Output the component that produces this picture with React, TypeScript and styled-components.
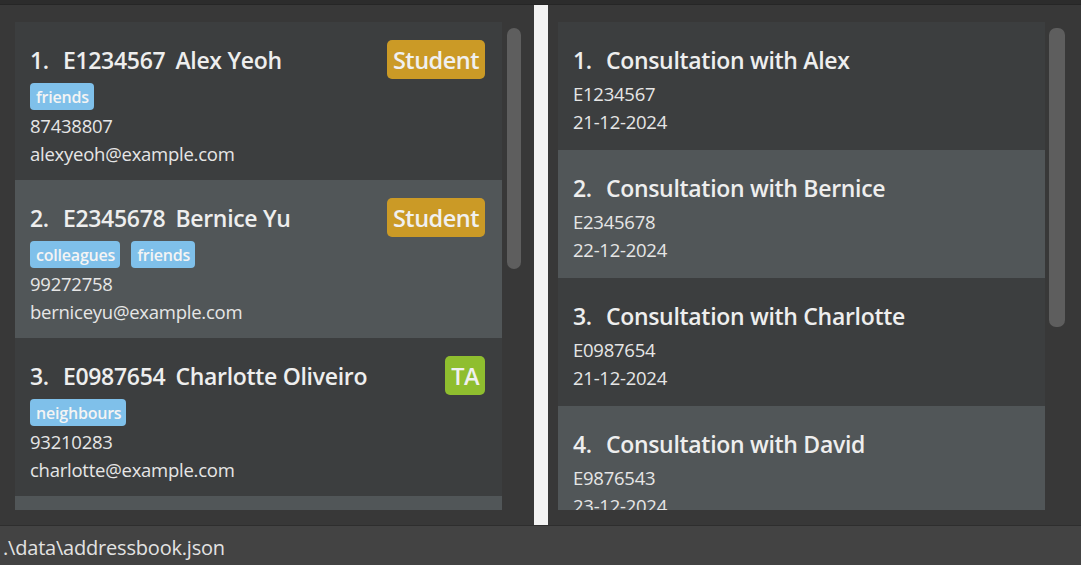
import React from "react";
import styled, { createGlobalStyle } from "styled-components";

const Global = createGlobalStyle`
  html, body { margin: 0; padding: 0; background: #383838; overflow: hidden; }
  body { font-family: "Open Sans", "Noto Sans", sans-serif; }
`;

const Window = styled.div`
  width: 1081px;
  height: 565px;
  display: flex;
  flex-direction: column;
  background: #383838;
`;

const TopEdge = styled.div`
  height: 5px;
  background: #2c2c2c;
  border-bottom: 1px solid #262626;
  box-sizing: border-box;
`;

const Main = styled.div`
  height: 520px;
  display: flex;
`;

const Panel = styled.div<{ $w?: number; $pl: number }>`
  ${(p) => (p.$w ? `width: ${p.$w}px;` : "flex: 1;")}
  box-sizing: border-box;
  padding: 17px 0 15px ${(p) => p.$pl}px;
  display: flex;
  background: #383838;
`;

const List = styled.div`
  width: 487px;
  height: 488px;
  overflow: hidden;
  display: flex;
  flex-direction: column;
`;

const ScrollTrack = styled.div<{ $ml: number }>`
  padding: 6px 0 0 ${(p) => p.$ml}px;
`;

const Thumb = styled.div<{ $w: number; $h: number }>`
  width: ${(p) => p.$w}px;
  height: ${(p) => p.$h}px;
  background: #5e5e5e;
  border-radius: 7px;
`;

const Divider = styled.div`
  width: 14px;
  background: #f3f3f3;
`;

const Card = styled.div<{ $even: boolean; $h: number }>`
  flex: 0 0 ${(p) => p.$h}px;
  height: ${(p) => p.$h}px;
  box-sizing: border-box;
  padding: 18px 17px 0 15px;
  background: ${(p) => (p.$even ? "#515658" : "#3c3e3f")};
  color: #ececec;
  display: flex;
  flex-direction: column;
`;

const HeadRow = styled.div`
  height: 39px;
  display: flex;
  align-items: center;
  justify-content: space-between;
`;

const Title = styled.div`
  font-size: 23px;
  font-weight: 600;
  white-space: nowrap;
  color: #eeeeee;
  letter-spacing: -0.3px;
`;

const Idx = styled.span<{ $gap: number }>`
  margin-right: ${(p) => p.$gap}px;
`;

const Mid = styled.span`
  margin-right: 10px;
`;

const Badge = styled.div<{ $bg: string }>`
  height: 39px;
  padding: 0 6px;
  box-sizing: border-box;
  border-radius: 5px;
  background: ${(p) => p.$bg};
  color: #f0f0f0;
  font-size: 23.5px;
  font-weight: 600;
  display: flex;
  align-items: center;
  letter-spacing: -0.5px;
`;

const Tags = styled.div`
  display: flex;
  gap: 11px;
  margin-top: 4px;
`;

const Tag = styled.div`
  height: 27px;
  padding: 0 5px 0 6px;
  border-radius: 4px;
  background: #7fc0ea;
  color: #f4f4f4;
  font-size: 16px;
  font-weight: 600;
  display: flex;
  align-items: center;
  letter-spacing: -0.2px;
`;

const Detail = styled.div<{ $first?: number }>`
  font-size: 18.5px;
  line-height: 28px;
  color: #e6e6e6;
  white-space: nowrap;
  margin-top: ${(p) => p.$first ?? 0}px;
  letter-spacing: -0.25px;
`;

const StatusBar = styled.div`
  flex: 1;
  background: #434343;
  border-top: 1px solid #2e2e2e;
  color: #e2e2e2;
  font-size: 20px;
  display: flex;
  align-items: center;
  padding: 3px 0 0 3px;
  letter-spacing: -0.2px;
`;

type Person = {
  id: string;
  name: string;
  role: "Student" | "TA";
  tags: string[];
  phone: string;
  email: string;
};

const people: Person[] = [
  { id: "E1234567", name: "Alex Yeoh", role: "Student", tags: ["friends"], phone: "87438807", email: "alexyeoh@example.com" },
  { id: "E2345678", name: "Bernice Yu", role: "Student", tags: ["colleagues", "friends"], phone: "99272758", email: "berniceyu@example.com" },
  { id: "E0987654", name: "Charlotte Oliveiro", role: "TA", tags: ["neighbours"], phone: "93210283", email: "charlotte@example.com" },
];

const consults = [
  { who: "Alex", id: "E1234567", date: "21-12-2024" },
  { who: "Bernice", id: "E2345678", date: "22-12-2024" },
  { who: "Charlotte", id: "E0987654", date: "21-12-2024" },
  { who: "David", id: "E9876543", date: "23-12-2024" },
];

export default function App() {
  return (
    <Window>
      <Global />
      <TopEdge />
      <Main>
        <Panel $w={534} $pl={15}>
          <List>
            {people.map((p, i) => (
              <Card key={p.id} $even={i % 2 === 1} $h={158}>
                <HeadRow>
                  <Title>
                    <Idx $gap={14}>{i + 1}.</Idx>
                    <Mid>{p.id}</Mid>
                    {p.name}
                  </Title>
                  <Badge $bg={p.role === "TA" ? "#8fbe2f" : "#cb9a26"}>{p.role}</Badge>
                </HeadRow>
                <Tags>
                  {p.tags.map((t) => (
                    <Tag key={t}>{t}</Tag>
                  ))}
                </Tags>
                <Detail $first={2}>{p.phone}</Detail>
                <Detail>{p.email}</Detail>
              </Card>
            ))}
            <Card $even={true} $h={158} />
          </List>
          <ScrollTrack $ml={5}>
            <Thumb $w={14} $h={241} />
          </ScrollTrack>
        </Panel>
        <Divider />
        <Panel $pl={10}>
          <List>
            {consults.map((c, i) => (
              <Card key={c.id} $even={i % 2 === 1} $h={128}>
                <HeadRow>
                  <Title>
                    <Idx $gap={14}>{i + 1}.</Idx>
                    Consultation with {c.who}
                  </Title>
                </HeadRow>
                <Detail $first={1}>{c.id}</Detail>
                <Detail>{c.date}</Detail>
              </Card>
            ))}
          </List>
          <ScrollTrack $ml={4}>
            <Thumb $w={16} $h={299} />
          </ScrollTrack>
        </Panel>
      </Main>
      <StatusBar>.\data\addressbook.json</StatusBar>
    </Window>
  );
}
